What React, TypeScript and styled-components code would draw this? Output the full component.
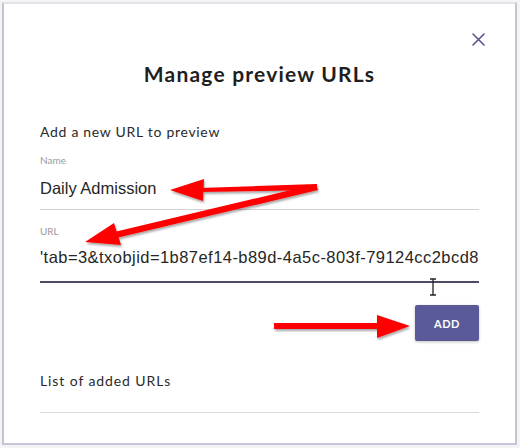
import React from "react";
import styled, { createGlobalStyle } from "styled-components";

const Global = createGlobalStyle`
  html, body { margin: 0; padding: 0; background: #f4f4f6; }
  body { font-family: "Lato", "Liberation Sans", sans-serif; }
  * { box-sizing: border-box; }
`;

const Frame = styled.div`
  position: relative;
  margin: 2px 3px 0 2px;
  width: 515px;
  height: 443px;
  background: #ffffff;
  border: 2px solid #c4c4ce;
  border-top-color: #e2e2e8;
  border-bottom-color: #c6c6da;
  padding: 23px 36px 0 36px;
  display: flex;
  flex-direction: column;
`;

const Header = styled.div`
  display: flex;
  justify-content: flex-end;
`;

const CloseButton = styled.button`
  width: 24px;
  height: 24px;
  margin-right: -11px;
  padding: 0;
  border: none;
  background: none;
  display: flex;
  align-items: center;
  justify-content: center;
  color: #55558a;
`;

const Title = styled.h1`
  margin: 11px 0 0 0;
  font-family: "Lato", sans-serif;
  font-weight: 700;
  font-size: 21px;
  line-height: 24px;
  letter-spacing: 1.2px;
  text-align: center;
  color: #1f1f1f;
`;

const SectionTitle = styled.div<{ $top: number; $spacing: number }>`
  margin-top: ${(p) => p.$top}px;
  font-family: "Lato", sans-serif;
  font-size: 14px;
  line-height: 16px;
  color: #2a2a2a;
  letter-spacing: ${(p) => p.$spacing}px;
`;

const Field = styled.div<{ $top: number }>`
  margin-top: ${(p) => p.$top}px;
  display: flex;
  flex-direction: column;
`;

const Label = styled.div`
  font-family: "Lato", sans-serif;
  font-size: 10px;
  line-height: 12px;
  color: #9a9a9a;
`;

const Value = styled.div<{ $focused?: boolean; $gap: number }>`
  margin-top: ${(p) => p.$gap}px;
  font-family: "Liberation Sans", Arial, sans-serif;
  font-size: 16.5px;
  line-height: 20px;
  letter-spacing: ${(p) => (p.$focused ? 0.45 : 0)}px;
  color: #262626;
  padding-bottom: ${(p) => (p.$focused ? 14 : 11)}px;
  border-bottom: ${(p) => (p.$focused ? "2px solid #4b4b68" : "1px solid #d2d2d2")};
  white-space: nowrap;
  overflow: hidden;
`;

const Actions = styled.div`
  margin-top: 22px;
  display: flex;
  justify-content: flex-end;
`;

const AddButton = styled.button`
  width: 64px;
  height: 36px;
  border: none;
  border-radius: 2px;
  background: #5a5a98;
  color: #ffffff;
  font-family: "Lato", sans-serif;
  font-weight: 700;
  font-size: 11px;
  letter-spacing: 0.6px;
  box-shadow: 0 1px 3px rgba(0, 0, 0, 0.25);
`;

const Divider = styled.div`
  margin-top: 23px;
  height: 1px;
  background: #dadada;
`;

const Overlay = styled.svg`
  position: absolute;
  left: -4px;
  top: -2px;
  pointer-events: none;
`;

export default function App() {
  return (
    <>
      <Global />
      <Frame>
        <Header>
          <CloseButton aria-label="Close">
            <svg width="13" height="13" viewBox="0 0 13 13">
              <path d="M1 1 L12 12 M12 1 L1 12" stroke="currentColor" strokeWidth="1.6" strokeLinecap="round" />
            </svg>
          </CloseButton>
        </Header>
        <Title>Manage preview URLs</Title>
        <SectionTitle $top={38} $spacing={0.7}>Add a new URL to preview</SectionTitle>
        <Field $top={14}>
          <Label>Name</Label>
          <Value $gap={12}>Daily Admission</Value>
        </Field>
        <Field $top={15}>
          <Label>URL</Label>
          <Value $gap={10} $focused>
            'tab=3&amp;txobjid=1b87ef14-b89d-4a5c-803f-79124cc2bcd8
          </Value>
        </Field>
        <Actions>
          <AddButton>ADD</AddButton>
        </Actions>
        <SectionTitle $top={32} $spacing={0.9}>List of added URLs</SectionTitle>
        <Divider />
        <Overlay width="520" height="448" viewBox="0 0 520 448">
          <defs>
            <filter id="sh" x="-10%" y="-10%" width="130%" height="140%">
              <feDropShadow dx="1" dy="2" stdDeviation="1.2" floodColor="#000" floodOpacity="0.35" />
            </filter>
          </defs>
          <g fill="#ff0000" filter="url(#sh)">
            <polygon points="317,182 317,188 200,190 200,186" />
            <polygon points="170,188 204,177 203,199" />
            <polygon points="316,182 318,188 112,237 110,231" />
            <polygon points="85,240 114,221 121,243" />
            <polygon points="274,321 380,321 380,327 274,327" />
            <polygon points="410,324 377,313 377,336" />
          </g>
          <g stroke="#222" strokeWidth="1.3" fill="none">
            <path d="M433 277 L433 293 M430 277 L436 277 M430 293 L436 293" />
          </g>
        </Overlay>
      </Frame>
    </>
  );
}
